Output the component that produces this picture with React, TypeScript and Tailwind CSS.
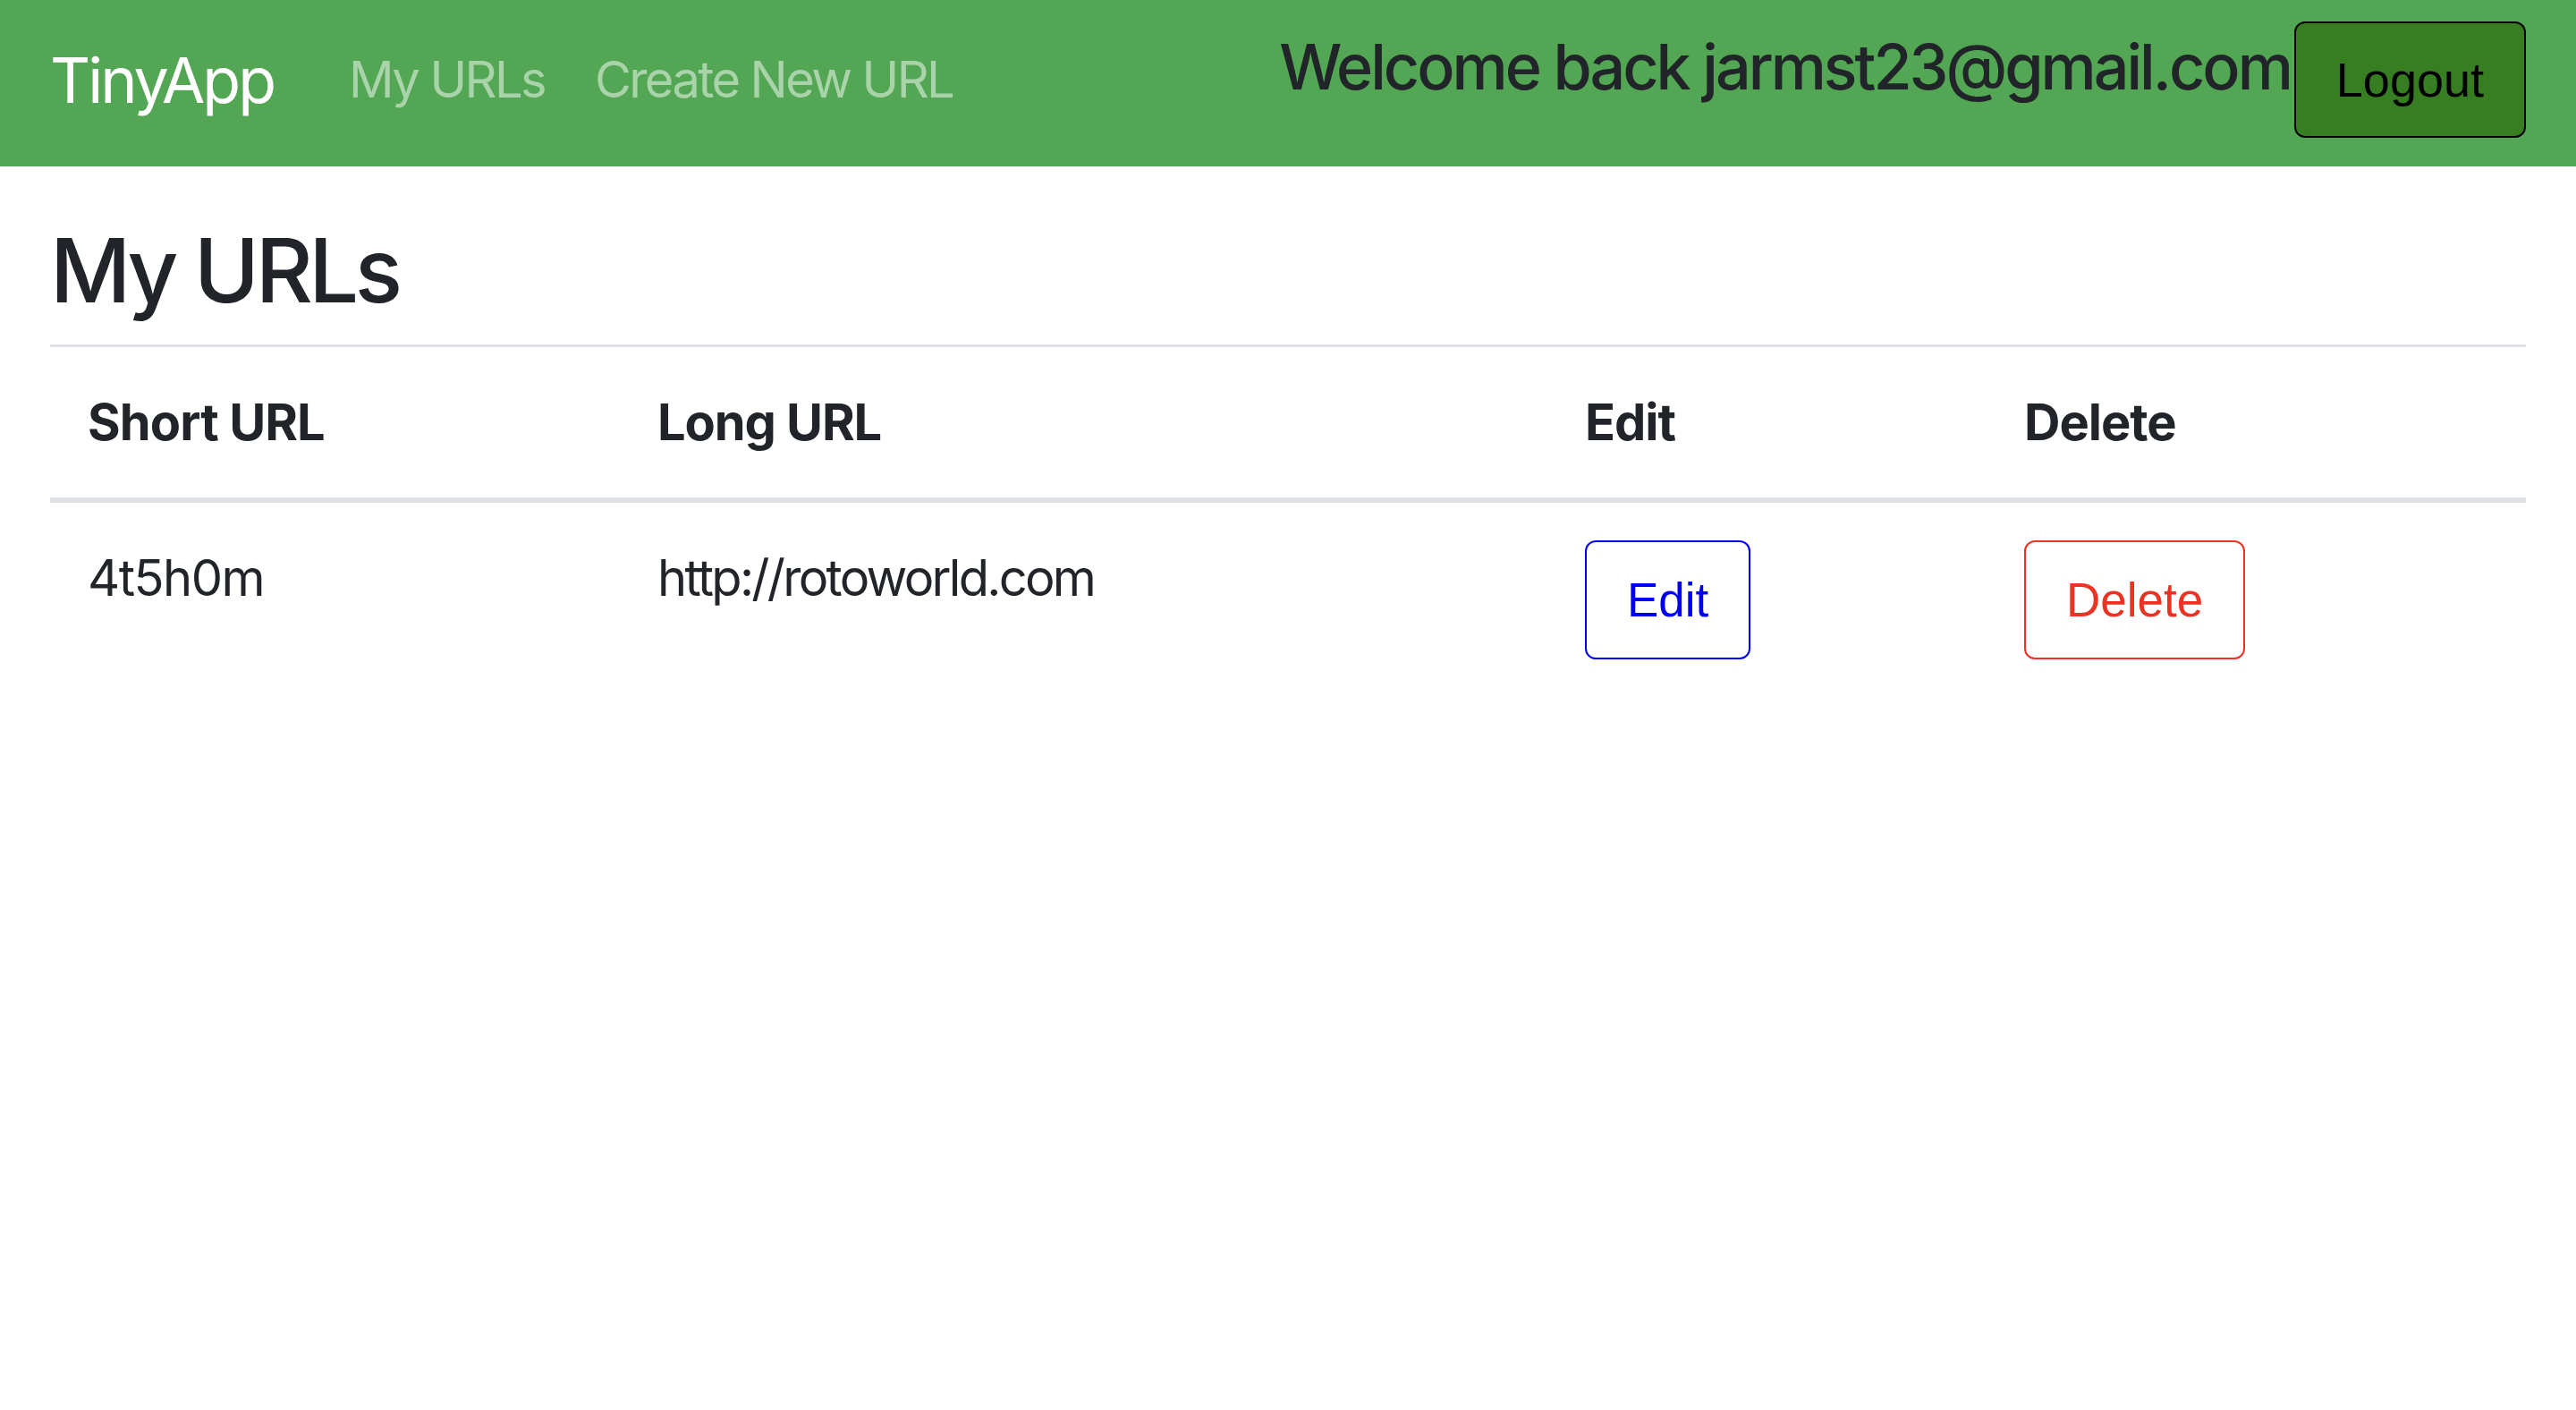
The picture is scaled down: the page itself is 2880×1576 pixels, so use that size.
import React from "react";

export default function App() {
  return (
    <div className="min-h-screen bg-white text-[#212529]" style={{ fontFamily: "Inter, 'Noto Sans', sans-serif" }}>
      <nav className="flex h-[186px] items-center bg-[#53a653] px-[56px] pb-[8px]">
        <span className="mr-[56px] text-[70px] leading-[105px] tracking-[-3px] text-white">TinyApp</span>
        <span className="px-[28px] text-[56px] leading-[84px] tracking-[-2.6px] text-[#a9d3a9]">My URLs</span>
        <span className="px-[28px] text-[56px] leading-[84px] tracking-[-2.6px] text-[#a9d3a9]">Create New URL</span>
        <div className="ml-auto flex items-center">
          <span className="mb-[28px] text-[70px] font-medium leading-[84px] tracking-[-3px] text-[#212529]">
            Welcome back jarmst23@gmail.com
          </span>
          <button
            className="ml-[4px] h-[130px] rounded-[12px] border-[2px] border-black bg-[#377d22] px-[45px] text-[54px] leading-[84px] text-black"
            style={{ fontFamily: "'Liberation Sans', Arial, sans-serif" }}
          >
            Logout
          </button>
        </div>
      </nav>
      <main className="px-[56px]">
        <h1 className="mt-[56px] mb-[23px] text-[99px] font-medium leading-[120px] tracking-[-4.5px]">My URLs</h1>
        <table className="w-full table-fixed border-collapse text-left text-[56px] leading-[84px]">
          <colgroup>
            <col className="w-[637px]" />
            <col className="w-[1037px]" />
            <col className="w-[491px]" />
            <col className="w-[603px]" />
          </colgroup>
          <thead>
            <tr className="border-t-[3px] border-b-[6px] border-[#dee2e6]">
              <th className="p-[42px] font-bold tracking-[-0.9px]">Short URL</th>
              <th className="p-[42px] font-bold tracking-[-1.1px]">Long URL</th>
              <th className="p-[42px] font-bold tracking-[-1px]">Edit</th>
              <th className="p-[42px] font-bold tracking-[-1px]">Delete</th>
            </tr>
          </thead>
          <tbody>
            <tr>
              <td className="p-[42px] align-top tracking-[-1.5px]">4t5h0m</td>
              <td className="p-[42px] align-top tracking-[-2.7px]">http://rotoworld.com</td>
              <td className="p-[42px] align-top">
                <button
                  className="h-[133px] rounded-[12px] border-[2px] border-[#0000f5] bg-white px-[45px] text-[53px] leading-[84px] text-[#0000f5]"
                  style={{ fontFamily: "'Liberation Sans', Arial, sans-serif" }}
                >
                  Edit
                </button>
              </td>
              <td className="p-[42px] align-top">
                <button
                  className="h-[133px] rounded-[12px] border-[2px] border-[#ea3323] bg-white px-[45px] text-[53px] leading-[84px] text-[#ea3323]"
                  style={{ fontFamily: "'Liberation Sans', Arial, sans-serif" }}
                >
                  Delete
                </button>
              </td>
            </tr>
          </tbody>
        </table>
      </main>
    </div>
  );
}
